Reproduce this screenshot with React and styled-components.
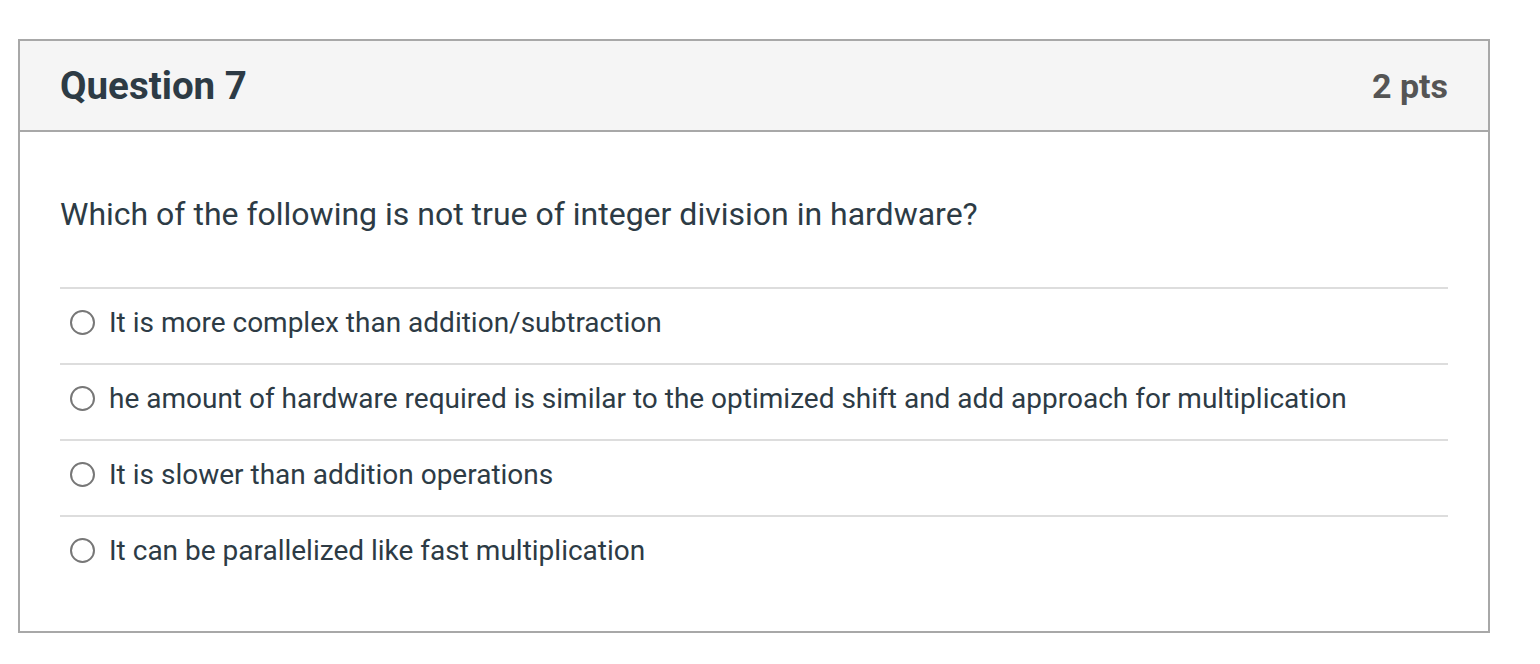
import React from 'react';
import styled, { createGlobalStyle } from 'styled-components';

const GlobalStyle = createGlobalStyle`
  body {
    margin: 0;
    background: #ffffff;
    font-family: Roboto, "Liberation Sans", Arial, sans-serif;
  }
`;

const answers = [
  'It is more complex than addition/subtraction',
  'he amount of hardware required is similar to the optimized shift and add approach for multiplication',
  'It is slower than addition operations',
  'It can be parallelized like fast multiplication',
];

const App = () => {
  return (
    <Page>
      <GlobalStyle />
      <QuestionCard>
        <Header>
          <Title>Question 7</Title>
          <Points>2 pts</Points>
        </Header>
        <Body>
          <QuestionText>
            Which of the following is not true of integer division in hardware?
          </QuestionText>
          <AnswerList>
            {answers.map((text) => (
              <AnswerRow key={text}>
                <Radio />
                <AnswerLabel>{text}</AnswerLabel>
              </AnswerRow>
            ))}
          </AnswerList>
        </Body>
      </QuestionCard>
    </Page>
  );
};

export default App;

const textColor = '#2d3b45';
const borderGrey = '#a8a8a8';

const Page = styled.div`
  padding: 39px 50px 31px 18px;
`;

const QuestionCard = styled.div`
  border: 2px solid ${borderGrey};
  background: #ffffff;
`;

const Header = styled.div`
  display: flex;
  justify-content: space-between;
  align-items: center;
  height: 89px;
  padding: 0 40px 0 40px;
  background: #f5f5f5;
  border-bottom: 2px solid ${borderGrey};
`;

const Title = styled.h2`
  margin: 0;
  font-size: 38.5px;
  font-weight: 700;
  color: ${textColor};
`;

const Points = styled.span`
  font-size: 34px;
  font-weight: 700;
  color: #555555;
`;

const Body = styled.div`
  padding: 62px 40px 40px 40px;
`;

const QuestionText = styled.p`
  margin: 0 0 53px 0;
  font-size: 32px;
  line-height: 40px;
  color: ${textColor};
`;

const AnswerList = styled.div`
  display: flex;
  flex-direction: column;
`;

const AnswerRow = styled.label`
  display: flex;
  align-items: center;
  gap: 14px;
  height: 76px;
  padding: 0 10px 8px 10px;
  box-sizing: border-box;
  border-top: 2px solid #dddddd;
`;

const Radio = styled.span`
  width: 21px;
  height: 21px;
  border: 2px solid #777777;
  border-radius: 50%;
  flex-shrink: 0;
`;

const AnswerLabel = styled.span`
  font-size: 28px;
  color: ${textColor};
`;
